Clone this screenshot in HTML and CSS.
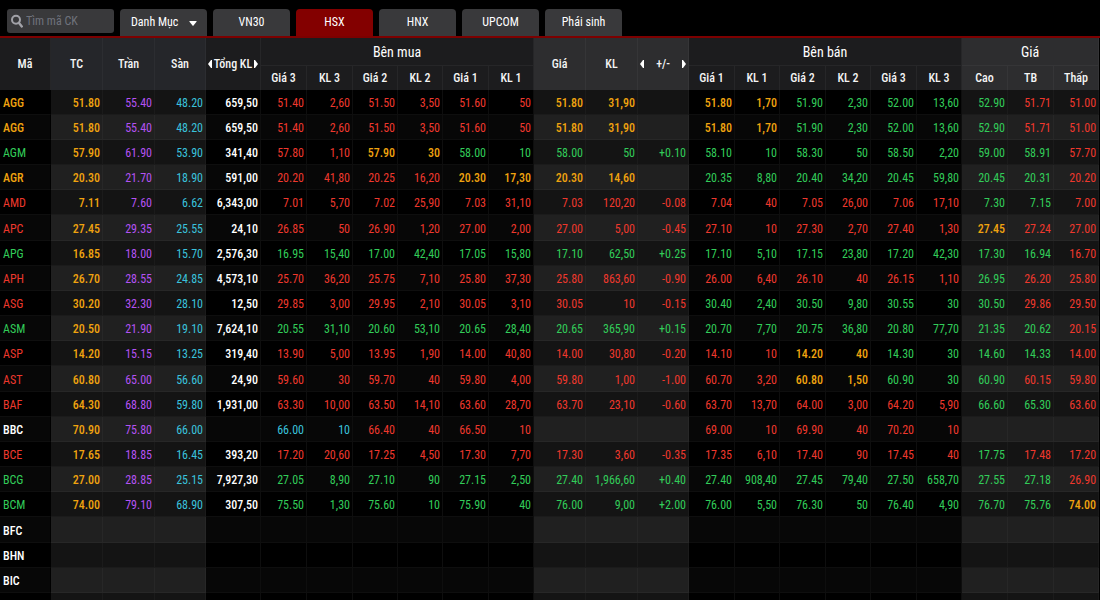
FILE: index.html
```html
<!DOCTYPE html>
<html lang="vi">
<head>
<meta charset="utf-8">
<meta name="viewport" content="width=device-width, initial-scale=1">
<title>Bảng giá HSX</title>
<link rel="stylesheet" href="styles.css">
</head>
<body>
<header class="toolbar">
  <label class="search">
    <svg class="search-icon" viewBox="0 0 12 14" aria-hidden="true"><circle cx="5" cy="5.7" r="4" fill="none" stroke="currentColor" stroke-width="2"/><path d="M7.8 8.8 10.8 12.4" stroke="currentColor" stroke-width="2.4" stroke-linecap="round"/></svg>
    <input class="search-input" type="text" placeholder="Tìm mã CK" aria-label="Tìm mã CK">
  </label>
  <nav class="tabs">
    <div class="tab-select">
      <select class="tab select" aria-label="Danh Mục"><option>Danh Mục</option></select>
      <svg class="caret" viewBox="0 0 8 5" aria-hidden="true"><path d="M0.8 0h6.4q.8 0 .3.7L4.5 4.6q-.5.6-1 0L.5.7Q0 0 .8 0z" fill="currentColor"/></svg>
    </div>
    <button class="tab" type="button">VN30</button>
    <button class="tab active" type="button">HSX</button>
    <button class="tab" type="button">HNX</button>
    <button class="tab" type="button">UPCOM</button>
    <button class="tab" type="button">Phái sinh</button>
  </nav>
</header>
<main class="board">
  <table class="quotes">
    <colgroup>
      <col class="w51"><col class="w52"><col class="w52"><col class="w51"><col class="w55">
      <col class="w46"><col class="w46"><col class="w45"><col class="w45"><col class="w46"><col class="w45">
      <col class="w52"><col class="w52"><col class="w51">
      <col class="w46"><col class="w45"><col class="w46"><col class="w45"><col class="w46"><col class="w45">
      <col class="w46"><col class="w46"><col class="w45">
    </colgroup>
    <thead>
      <tr class="head-top">
        <th rowspan="2">Mã</th>
        <th rowspan="2" class="ref">TC</th>
        <th rowspan="2" class="ref">Trần</th>
        <th rowspan="2" class="ref">Sàn</th>
        <th rowspan="2"><div class="switcher"><button type="button" class="step prev" aria-label="Cột trước"></button>Tổng KL<button type="button" class="step next" aria-label="Cột sau"></button></div></th>
        <th colspan="6" class="group">Bên mua</th>
        <th rowspan="2" class="lit">Giá</th>
        <th rowspan="2" class="lit">KL</th>
        <th rowspan="2" class="lit"><div class="switcher"><button type="button" class="step prev" aria-label="Cột trước"></button>+/-<button type="button" class="step next" aria-label="Cột sau"></button></div></th>
        <th colspan="6" class="group">Bên bán</th>
        <th colspan="3" class="group lit">Giá</th>
      </tr>
      <tr class="head-sub">
        <th>Giá 3</th><th>KL 3</th><th>Giá 2</th><th>KL 2</th><th>Giá 1</th><th>KL 1</th>
        <th>Giá 1</th><th>KL 1</th><th>Giá 2</th><th>KL 2</th><th>Giá 3</th><th>KL 3</th>
        <th class="lit">Cao</th><th class="lit">TB</th><th class="lit">Thấp</th>
      </tr>
    </thead>
    <tbody id="rows"></tbody>
  </table>
</main>
<script src="board.js"></script>
</body>
</html>
```
FILE: styles.css
```css
* { box-sizing: border-box; }
body {
  margin: 0;
  height: 100vh;
  display: flex;
  flex-direction: column;
  overflow: hidden;
  background: #000;
  color: #f2f2f2;
  font-family: "Roboto Condensed", "Liberation Sans Narrow", Roboto, sans-serif;
  font-size: 12px;
}
button, input, select { font: inherit; color: inherit; border: 0; margin: 0; }

.toolbar {
  flex: none;
  display: flex;
  gap: 6px;
  padding: 9px 7px 0;
  border-bottom: 2px solid #7d0000;
}
.search {
  display: flex;
  align-items: center;
  gap: 3px;
  width: 107px;
  height: 24px;
  padding: 0 4px;
  border-radius: 3px;
  background: #39393b;
}
.search-icon { flex: none; width: 12px; height: 14px; color: #a2a2a8; }
.search-input { flex: 1; min-width: 0; padding: 0; background: transparent; outline: 0; }
.search-input::placeholder { color: #6f727c; opacity: 1; }
.tabs { display: flex; gap: 6px; }
.tab {
  width: 77px;
  height: 27px;
  padding: 0 0 2px;
  border-radius: 4px 4px 0 0;
  background: #39393b;
  color: #fff;
  text-align: center;
}
.tab.active { background: #830000; }
.tab-select { position: relative; }
.select { width: 87px; padding: 0 20px 2px 11px; appearance: none; text-align: left; }
.caret { position: absolute; right: 10px; top: 12px; width: 8px; height: 5px; color: #fff; pointer-events: none; }

.board { flex: 1; min-height: 0; overflow: hidden; padding-right: 1px; }
.quotes { width: 100%; table-layout: fixed; border-collapse: separate; border-spacing: 0; }
.w45 { width: 45px; }
.w46 { width: 46px; }
.w51 { width: 51px; }
.w52 { width: 52px; }
.w55 { width: 55px; }

th {
  padding: 0;
  background: #1c1c1e;
  border-right: 1px solid #262628;
  font-weight: 500;
  color: #f4f4f4;
  white-space: nowrap;
}
th.ref { background: #25262a; border-color: #2c2d31; }
th.lit { background: #2d2d2f; border-color: #353537; }
.head-top { height: 28px; }
.head-sub { height: 24px; }
.group { font-size: 14px; font-weight: 400; color: #fff; border-bottom: 1px solid #262628; }
.group.lit { border-bottom-color: #353537; }

.switcher { display: flex; align-items: center; justify-content: space-between; padding: 0 2px; }
.step { width: 4px; height: 8px; padding: 0; background: #fff; }
.prev { clip-path: polygon(0 50%, 75% 0, 100% 0, 100% 100%, 75% 100%); }
.next { clip-path: polygon(100% 50%, 25% 0, 0 0, 0 100%, 25% 100%); }

tbody tr { height: 25px; }
tbody tr:nth-child(6n) { height: 26px; }
td, tbody th {
  padding: 2px 2px 0 0;
  background: #000;
  border-right: 1px solid #0e0e0e;
  border-bottom: 1px solid #0e0e0e;
  text-align: right;
  white-space: nowrap;
}
tbody th { padding-left: 3px; text-align: left; border-right-color: #000; font-weight: 400; }
tr:nth-child(even) td, tbody tr:nth-child(even) th { background: #070707; }
tbody .lit { background: #141414; border-color: #1b1b1b; }
tbody tr:nth-child(even) .lit { background: #202020; border-color: #272727; }
tbody .red { color: #ee382d; }
tbody .green { color: #32cc59; }
tbody .amber { color: #f0a30f; font-weight: 500; }
tbody .violet { color: #b452f2; }
tbody .cyan { color: #3ac2dc; }
tbody .white { color: #fff; font-weight: 500; }
```
FILE: board.js
```js
// Each value may end in a colour letter; a dash stands for an empty cell.
const quotes = [
  "AGGy 51.80 55.40 48.20 659,50 51.40r 2,60r 51.50r 3,50r 51.60r 50r 51.80y 31,90y - 51.80y 1,70y 51.90g 2,30g 52.00g 13,60g 52.90g 51.71r 51.00r",
  "AGGy 51.80 55.40 48.20 659,50 51.40r 2,60r 51.50r 3,50r 51.60r 50r 51.80y 31,90y - 51.80y 1,70y 51.90g 2,30g 52.00g 13,60g 52.90g 51.71r 51.00r",
  "AGMg 57.90 61.90 53.90 341,40 57.80r 1,10r 57.90y 30y 58.00g 10g 58.00g 50g +0.10g 58.10g 10g 58.30g 50g 58.50g 2,20g 59.00g 58.91g 57.70r",
  "AGRy 20.30 21.70 18.90 591,00 20.20r 41,80r 20.25r 16,20r 20.30y 17,30y 20.30y 14,60y - 20.35g 8,80g 20.40g 34,20g 20.45g 59,80g 20.45g 20.31g 20.20r",
  "AMDr 7.11 7.60 6.62 6,343,00 7.01r 5,70r 7.02r 25,90r 7.03r 31,10r 7.03r 120,20r -0.08r 7.04r 40r 7.05r 26,00r 7.06r 17,10r 7.30g 7.15g 7.00r",
  "APCr 27.45 29.35 25.55 24,10 26.85r 50r 26.90r 1,20r 27.00r 2,00r 27.00r 5,00r -0.45r 27.10r 10r 27.30r 2,70r 27.40r 1,30r 27.45y 27.24r 27.00r",
  "APGg 16.85 18.00 15.70 2,576,30 16.95g 15,40g 17.00g 42,40g 17.05g 15,80g 17.10g 62,50g +0.25g 17.10g 5,10g 17.15g 23,80g 17.20g 42,30g 17.30g 16.94g 16.70r",
  "APHr 26.70 28.55 24.85 4,573,10 25.70r 36,20r 25.75r 7,10r 25.80r 37,30r 25.80r 863,60r -0.90r 26.00r 6,40r 26.10r 40r 26.15r 1,10r 26.95g 26.20r 25.80r",
  "ASGr 30.20 32.30 28.10 12,50 29.85r 3,00r 29.95r 2,10r 30.05r 3,10r 30.05r 10r -0.15r 30.40g 2,40g 30.50g 9,80g 30.55g 30g 30.50g 29.86r 29.50r",
  "ASMg 20.50 21.90 19.10 7,624,10 20.55g 31,10g 20.60g 53,10g 20.65g 28,40g 20.65g 365,90g +0.15g 20.70g 7,70g 20.75g 36,80g 20.80g 77,70g 21.35g 20.62g 20.15r",
  "ASPr 14.20 15.15 13.25 319,40 13.90r 5,00r 13.95r 1,90r 14.00r 40,80r 14.00r 30,80r -0.20r 14.10r 10r 14.20y 40y 14.30g 30g 14.60g 14.33g 14.00r",
  "ASTr 60.80 65.00 56.60 24,90 59.60r 30r 59.70r 40r 59.80r 4,00r 59.80r 1,00r -1.00r 60.70r 3,20r 60.80y 1,50y 60.90g 30g 60.90g 60.15r 59.80r",
  "BAFr 64.30 68.80 59.80 1,931,00 63.30r 10,00r 63.50r 14,10r 63.60r 28,70r 63.70r 23,10r -0.60r 63.70r 13,70r 64.00r 3,00r 64.20r 5,90r 66.60g 65.30g 63.60r",
  "BBCw 70.90 75.80 66.00 - 66.00c 10c 66.40r 40r 66.50r 10r - - - 69.00r 10r 69.90r 40r 70.20r 10r - - -",
  "BCEr 17.65 18.85 16.45 393,20 17.20r 20,60r 17.25r 4,50r 17.30r 7,70r 17.30r 3,60r -0.35r 17.35r 6,10r 17.40r 90r 17.45r 40r 17.75g 17.48r 17.20r",
  "BCGg 27.00 28.85 25.15 7,927,30 27.05g 8,90g 27.10g 90g 27.15g 2,50g 27.40g 1,966,60g +0.40g 27.40g 908,40g 27.45g 79,40g 27.50g 658,70g 27.55g 27.18g 26.90r",
  "BCMg 74.00 79.10 68.90 307,50 75.50g 1,30g 75.60g 10g 75.90g 40g 76.00g 9,00g +2.00g 76.00g 5,50g 76.30g 50g 76.40g 4,90g 76.70g 75.76g 74.00y",
  "BFCw", "BHNw", "BICw", "-"
];
const colours = { r: "red", g: "green", y: "amber", c: "cyan", w: "white" };
const fixed = { 1: "amber", 2: "violet", 3: "cyan", 4: "white" };
const lit = new Set([1, 2, 3, 11, 12, 13, 20, 21, 22]);

const body = document.getElementById("rows");
for (const line of quotes) {
  const values = line.split(" ");
  const row = body.insertRow();
  for (let i = 0; i < 23; i++) {
    let text = values[i] && values[i] !== "-" ? values[i] : "";
    let colour = fixed[i];
    if (text && !colour) {
      colour = colours[text.slice(-1)];
      text = text.slice(0, -1);
    }
    const cell = document.createElement(i === 0 ? "th" : "td");
    if (i === 0) cell.scope = "row";
    if (colour) cell.classList.add(colour);
    if (lit.has(i)) cell.classList.add("lit");
    cell.textContent = text;
    row.append(cell);
  }
}
```
